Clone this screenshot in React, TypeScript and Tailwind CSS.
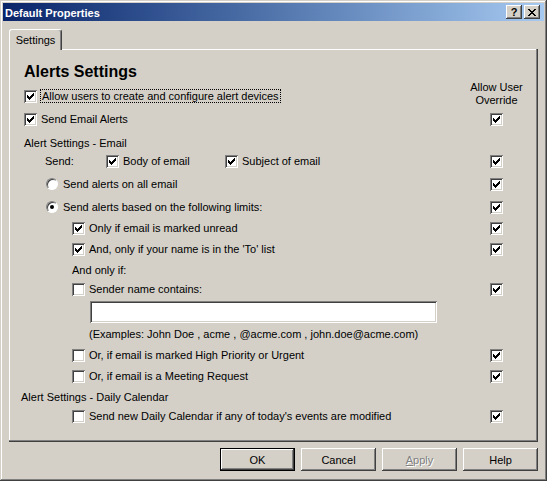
import React from 'react'

function Check({ checked }: { checked?: boolean }) {
  return (
    <span className="block h-[13px] w-[13px] shrink-0 bg-white shadow-[inset_1px_1px_#808080,inset_-1px_-1px_#ffffff,inset_2px_2px_#404040,inset_-2px_-2px_#d4d0c8]">
      {checked && (
        <svg width="13" height="13" className="block" shapeRendering="crispEdges">
          {[2, 3, 4, 3, 2, 1, 0].map((y, i) => (
            <rect key={i} x={3 + i} y={3 + y} width="1" height="3" fill="#000" />
          ))}
        </svg>
      )}
    </span>
  )
}

function Radio({ checked }: { checked?: boolean }) {
  return (
    <span className="flex h-[12px] w-[12px] shrink-0 items-center justify-center rounded-full border border-t-[#808080] border-l-[#808080] border-r-white border-b-white bg-white shadow-[inset_1px_1px_#404040]">
      {checked && <span className="block h-[4px] w-[4px] rounded-full bg-black" />}
    </span>
  )
}

function CheckLabel({ checked, children }: { checked?: boolean; children: React.ReactNode }) {
  return (
    <span className="flex items-center gap-[4px] whitespace-nowrap">
      <Check checked={checked} />
      <span>{children}</span>
    </span>
  )
}

function RadioLabel({ checked, children }: { checked?: boolean; children: React.ReactNode }) {
  return (
    <span className="flex items-center gap-[5px] whitespace-nowrap">
      <Radio checked={checked} />
      <span>{children}</span>
    </span>
  )
}

function Row({
  className,
  pad,
  override,
  children,
}: {
  className: string
  pad: string
  override?: boolean
  children: React.ReactNode
}) {
  return (
    <div className={`flex h-[14px] items-center ${className}`}>
      <div className={`flex w-[457px] items-center whitespace-nowrap ${pad}`}>{children}</div>
      <div className="flex w-[61px] justify-center">{override && <Check checked />}</div>
    </div>
  )
}

function Btn({ children, isDefault }: { children: React.ReactNode; isDefault?: boolean }) {
  const raised =
    'flex items-center justify-center bg-[#d4d0c8] shadow-[inset_-1px_-1px_#404040,inset_1px_1px_#ffffff,inset_-2px_-2px_#808080]'
  if (isDefault) {
    return (
      <div className="h-[23px] w-[75px] border border-black">
        <div className={`h-full w-full ${raised}`}>{children}</div>
      </div>
    )
  }
  return <div className={`h-[23px] w-[75px] ${raised}`}>{children}</div>
}

function CaptionBtn({ children }: { children: React.ReactNode }) {
  return (
    <div className="flex h-[14px] w-[16px] items-center justify-center bg-[#d4d0c8] shadow-[inset_-1px_-1px_#404040,inset_1px_1px_#ffffff,inset_-2px_-2px_#808080]">
      {children}
    </div>
  )
}

export default function App() {
  return (
    <div className="flex h-[481px] w-[547px] flex-col bg-[#d4d0c8] p-[3px] font-['Liberation_Sans',Arial,sans-serif] text-[11px] leading-[14px] text-black shadow-[inset_-1px_-1px_#404040,inset_1px_1px_#d4d0c8,inset_-2px_-2px_#808080,inset_2px_2px_#ffffff]">
      {/* title bar */}
      <div className="flex h-[18px] items-center justify-between bg-gradient-to-r from-[#0a246a] to-[#a6caf0] pl-[2px] pr-[4px]">
        <span className="pt-px font-bold text-white">Default Properties</span>
        <div className="flex gap-[2px]">
          <CaptionBtn>
            <span className="text-[11px] leading-[11px] font-bold">?</span>
          </CaptionBtn>
          <CaptionBtn>
            <svg width="8" height="7" shapeRendering="crispEdges">
              {[0, 1, 2, 3, 4, 5, 6].map(r => {
                const a = r <= 3 ? r : 6 - r
                return (
                  <g key={r}>
                    <rect x={a} y={r} width="2" height="1" fill="#000" />
                    <rect x={6 - a} y={r} width="2" height="1" fill="#000" />
                  </g>
                )
              })}
            </svg>
          </CaptionBtn>
        </div>
      </div>

      {/* tab */}
      <div className="relative z-10 -mb-px ml-[6px] mt-[8px] flex h-[21px] w-[53px] justify-center rounded-t-[3px] border-t border-l border-r border-t-white border-l-white border-r-[#404040] bg-[#d4d0c8] pt-[3px] shadow-[inset_-1px_0_#808080]">
        Settings
      </div>

      {/* panel */}
      <div className="ml-[6px] flex h-[393px] w-[529px] flex-col pt-[14px] shadow-[inset_-1px_-1px_#404040,inset_-2px_-2px_#808080,inset_1px_1px_#ffffff]">
        <div className="flex h-[40px]">
          <div className="flex w-[457px] flex-col">
            <div className="h-[18px] pl-[15px] text-[16px] leading-[18px] font-bold">Alerts Settings</div>
            <div className="mt-[8px] flex h-[14px] items-center gap-[3px] pl-[15px]">
              <Check checked />
              <span className="border border-dotted border-black px-px leading-[12px] whitespace-nowrap">
                Allow users to create and configure alert devices
              </span>
            </div>
          </div>
          <div className="w-[61px] shrink-0 pt-[18px] text-center leading-[13px]">
            Allow User
            <br />
            Override
          </div>
        </div>

        <Row className="mt-[9px]" pad="pl-[15px]" override>
          <CheckLabel checked>Send Email Alerts</CheckLabel>
        </Row>
        <Row className="mt-[10px]" pad="pl-[15px]">
          Alert Settings - Email
        </Row>
        <Row className="mt-[4px]" pad="pl-[36px]" override>
          <span className="w-[61px]">Send:</span>
          <span className="w-[119px]">
            <CheckLabel checked>Body of email</CheckLabel>
          </span>
          <CheckLabel checked>Subject of email</CheckLabel>
        </Row>
        <Row className="mt-[9px]" pad="pl-[37px]" override>
          <RadioLabel>Send alerts on all email</RadioLabel>
        </Row>
        <Row className="mt-[9px]" pad="pl-[37px]" override>
          <RadioLabel checked>Send alerts based on the following limits:</RadioLabel>
        </Row>
        <Row className="mt-[7px]" pad="pl-[63px]" override>
          <CheckLabel checked>Only if email is marked unread</CheckLabel>
        </Row>
        <Row className="mt-[7px]" pad="pl-[63px]" override>
          <CheckLabel checked>And, only if your name is in the 'To' list</CheckLabel>
        </Row>
        <Row className="mt-[7px]" pad="pl-[63px]">
          And only if:
        </Row>
        <Row className="mt-[5px]" pad="pl-[63px]" override>
          <CheckLabel>Sender name contains:</CheckLabel>
        </Row>
        <div className="mt-[5px] pl-[81px]">
          <div className="h-[22px] w-[347px] bg-white shadow-[inset_1px_1px_#808080,inset_-1px_-1px_#ffffff,inset_2px_2px_#404040,inset_-2px_-2px_#d4d0c8]" />
        </div>
        <Row className="mt-[4px]" pad="pl-[80px]">
          (Examples: John Doe , acme , @acme.com , john.doe@acme.com)
        </Row>
        <Row className="mt-[7px]" pad="pl-[63px]" override>
          <CheckLabel>Or, if email is marked High Priority or Urgent</CheckLabel>
        </Row>
        <Row className="mt-[7px]" pad="pl-[63px]" override>
          <CheckLabel>Or, if email is a Meeting Request</CheckLabel>
        </Row>
        <Row className="mt-[7px]" pad="pl-[12px]">
          Alert Settings - Daily Calendar
        </Row>
        <Row className="mt-[5px]" pad="pl-[63px]" override>
          <CheckLabel>Send new Daily Calendar if any of today's events are modified</CheckLabel>
        </Row>
      </div>

      {/* buttons */}
      <div className="mt-[6px] flex justify-end gap-[6px] pr-[6px]">
        <Btn isDefault>OK</Btn>
        <Btn>Cancel</Btn>
        <Btn>
          <span className="text-[#808080] [text-shadow:1px_1px_0_#ffffff]">
            <span className="underline">A</span>pply
          </span>
        </Btn>
        <Btn>Help</Btn>
      </div>
    </div>
  )
}
